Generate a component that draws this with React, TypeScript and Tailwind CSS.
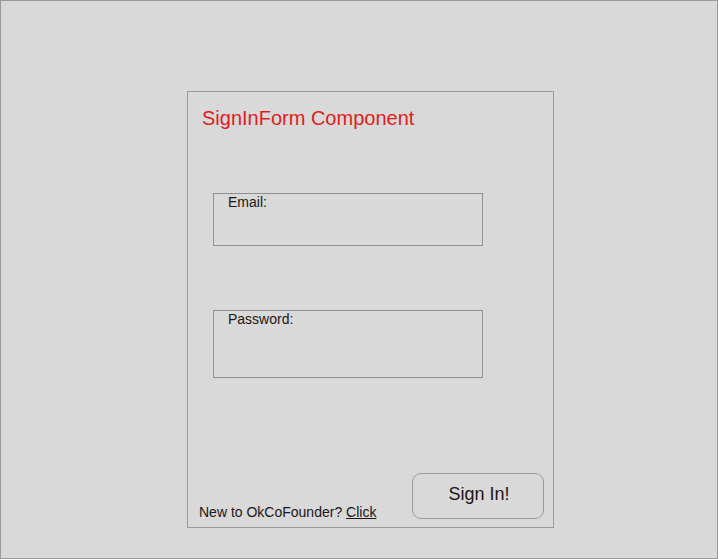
export default function App() {
  return (
    <div className="w-[718px] h-[559px] border border-[#9a9a9a] bg-[#d9d9d9] pl-[186px] pt-[90px] font-['Liberation_Sans',Arial,sans-serif] text-[#201616]">
      <div className="w-[367px] h-[437px] border border-[#9a9a9a] flex flex-col">
        <div className="pl-[14px] pt-[15px] text-[20px] leading-[23px] text-[#e21c1c]">
          SignInForm Component
        </div>
        <div className="ml-[25px] mt-[63px] w-[270px] h-[53px] border border-[#8f8f8f] pl-[14px] text-[14px] leading-[16px]">
          Email:
        </div>
        <div className="ml-[25px] mt-[64px] w-[270px] h-[68px] border border-[#8f8f8f] pl-[14px] text-[14px] leading-[16px]">
          Password:
        </div>
        <div className="mt-auto flex items-end justify-between pl-[11px] pr-[9px] pb-[7px]">
          <div className="text-[14px] leading-[16px]">
            New to OkCoFounder? <span className="underline">Click</span>
          </div>
          <div className="mb-[1px] w-[132px] h-[46px] border border-[#9a9a9a] rounded-[9px] flex justify-center pl-[2px] pt-[10px] text-[18px] leading-[21px]">
            Sign In!
          </div>
        </div>
      </div>
    </div>
  );
}
